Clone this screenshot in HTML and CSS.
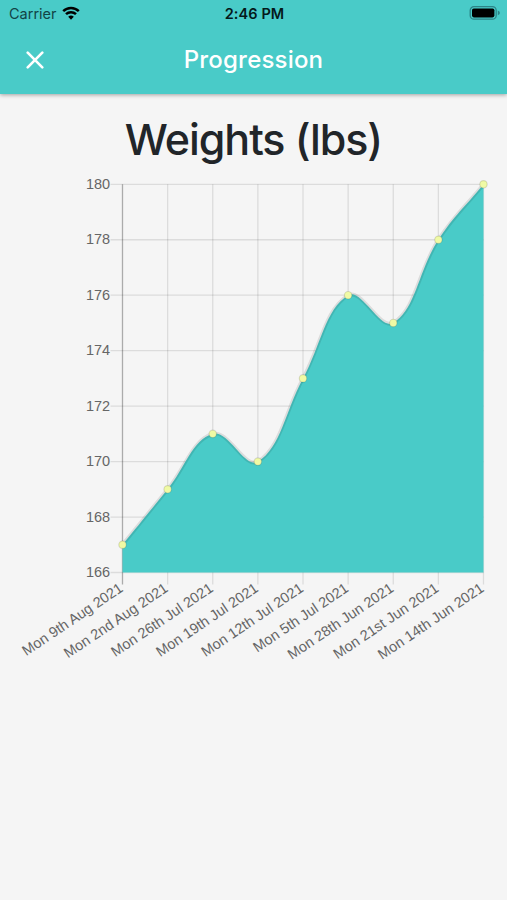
FILE: index.html
```html
<!DOCTYPE html>
<html lang="en">
<head>
    <meta charset="UTF-8">
    <meta name="viewport" content="width=device-width, initial-scale=1.0">
    <title>Progression</title>
    <link rel="stylesheet" href="styles.css">
</head>
<body>
    <header class="header">
        <div class="status-bar">
            <div class="carrier">
                <span>Carrier</span>
                <svg class="wifi" viewBox="0 0 18 14">
                    <path d="M1.2 5.2 A11.2 11.2 0 0 1 16.8 5.2" />
                    <path d="M4 8.2 A7.2 7.2 0 0 1 14 8.2" />
                    <path class="wifi-dot" d="M9 13.7 L6.2 10.8 A4 4 0 0 1 11.8 10.8 Z" />
                </svg>
            </div>
            <div class="time">2:46 PM</div>
            <div class="battery">
                <svg viewBox="0 0 32 16">
                    <rect class="battery-case" x="1.2" y="1.6" width="26" height="12.6" rx="3.8" />
                    <rect x="3" y="3.4" width="22.4" height="9" rx="1.8" />
                    <path class="battery-tip" d="M28.8 5.6 Q30.9 6.4 30.9 7.9 Q30.9 9.4 28.8 10.2 Z" />
                </svg>
            </div>
        </div>
        <div class="nav-bar">
            <svg class="close" viewBox="0 0 18 18">
                <path d="M1.7 1.7 L16.3 16.3 M16.3 1.7 L1.7 16.3" />
            </svg>
            <div class="nav-title">Progression</div>
        </div>
    </header>

    <main class="content">
        <h1 class="chart-title">Weights (lbs)</h1>
        <svg id="chart" class="chart" viewBox="0 170 507 510"></svg>
    </main>

    <script src="script.js"></script>
</body>
</html>
```
FILE: styles.css
```css
body {
    margin: 0;
    min-height: 100vh;
    background: #f5f5f5;
    font-family: Inter, "Liberation Sans", sans-serif;
    overflow: hidden;
}
.header {
    height: 94px;
    background: #49cbc8;
    box-shadow: 0 1px 4px rgba(0, 0, 0, 0.35);
}
.status-bar {
    display: grid;
    grid-template-columns: 1fr auto 1fr;
    align-items: center;
    height: 27px;
    padding: 0 7px 0 9px;
    font-size: 14.5px;
    color: #04191a;
}
.carrier {
    display: flex;
    align-items: center;
    gap: 5px;
    color: #124446;
}
.wifi {
    width: 18px;
    height: 14px;
    margin-bottom: 2px;
    fill: none;
    stroke: #000;
    stroke-width: 2.5;
}
.wifi-dot {
    fill: #000;
    stroke: none;
}
.time {
    font-weight: 600;
    letter-spacing: 0.1px;
}
.battery {
    display: flex;
    justify-content: flex-end;
    margin-right: -1px;
    padding-bottom: 1px;
}
.battery svg {
    width: 32px;
    height: 16px;
}
.battery-case {
    fill: none;
    stroke: #2c8487;
    stroke-width: 1.3;
}
.battery-tip {
    fill: #2c8487;
}
.nav-bar {
    display: grid;
    grid-template-columns: 1fr auto 1fr;
    align-items: center;
    height: 65px;
    padding: 0 26px;
    color: #fff;
}
.close {
    width: 18px;
    height: 18px;
    fill: none;
    stroke: #fff;
    stroke-width: 2.6;
    stroke-linecap: round;
}
.nav-title {
    font-size: 24px;
    font-weight: 500;
    letter-spacing: 0.2px;
}
.content {
    display: flex;
    flex-direction: column;
}
.chart-title {
    margin: 19px 0 5px;
    font-size: 43px;
    font-weight: 500;
    letter-spacing: -1.05px;
    line-height: 52px;
    text-align: center;
    color: #212529;
}
.chart {
    width: 507px;
    height: 510px;
}
.grid-line {
    stroke: rgba(0, 0, 0, 0.1);
    stroke-width: 1.3;
}
.zero-line {
    stroke: rgba(0, 0, 0, 0.3);
    stroke-width: 1.3;
}
.area {
    fill: #49cbc8;
}
.line {
    fill: none;
    stroke: rgba(0, 0, 0, 0.1);
    stroke-width: 3.7;
}
.point {
    fill: #f0faa5;
    stroke: rgba(0, 0, 0, 0.12);
    stroke-width: 1.2;
}
.label {
    font-family: "Liberation Sans", Arial, sans-serif;
    font-size: 14.5px;
    fill: #666;
    text-anchor: end;
}
```
FILE: script.js
```javascript
const weights = [167, 169, 171, 170, 173, 176, 175, 178, 180];
const dates = [
    "Mon 9th Aug 2021",
    "Mon 2nd Aug 2021",
    "Mon 26th Jul 2021",
    "Mon 19th Jul 2021",
    "Mon 12th Jul 2021",
    "Mon 5th Jul 2021",
    "Mon 28th Jun 2021",
    "Mon 21st Jun 2021",
    "Mon 14th Jun 2021"
];

const left = 122.5, right = 483.5, top1 = 184.3, bottom = 572.5;
const min = 166, max = 180, tick = 12;
const chart = document.getElementById("chart");

function add(tag, attrs, text) {
    const el = document.createElementNS("http://www.w3.org/2000/svg", tag);
    for (const key in attrs) {
        el.setAttribute(key, attrs[key]);
    }
    if (text) {
        el.textContent = text;
    }
    chart.appendChild(el);
}

function getX(i) {
    return left + i * (right - left) / (weights.length - 1);
}

function getY(value) {
    return bottom - (value - min) * (bottom - top1) / (max - min);
}

// control points on both sides of a point
function controls(points, i) {
    const cur = points[i];
    const prev = points[i - 1] || cur;
    const next = points[i + 1] || cur;
    const d1 = Math.hypot(cur.x - prev.x, cur.y - prev.y);
    const d2 = Math.hypot(next.x - cur.x, next.y - cur.y);
    const a = 0.4 * d1 / (d1 + d2);
    const b = 0.4 * d2 / (d1 + d2);
    return {
        before: (cur.x - a * (next.x - prev.x)) + " " + (cur.y - a * (next.y - prev.y)),
        after: (cur.x + b * (next.x - prev.x)) + " " + (cur.y + b * (next.y - prev.y))
    };
}

// horizontal grid
for (let v = min; v <= max; v += 2) {
    add("line", { class: "grid-line", x1: left - tick, x2: right, y1: getY(v), y2: getY(v) });
    add("text", { class: "label", x: 110.2, y: getY(v) + 4.6 }, String(v));
}

// vertical grid
dates.forEach((date, i) => {
    const x = getX(i);
    add("line", { class: i === 0 ? "zero-line" : "grid-line", x1: x, x2: x, y1: top1, y2: bottom + tick });
    add("text", { class: "label", transform: "translate(" + (x + 1.4) + " 590.5) rotate(-34)" }, date);
});

const points = weights.map((w, i) => ({ x: getX(i), y: getY(w) }));
let path = "M" + points[0].x + " " + points[0].y;
for (let i = 1; i < points.length; i++) {
    path += " C" + controls(points, i - 1).after + " " + controls(points, i).before + " " + points[i].x + " " + points[i].y;
}

add("path", { class: "area", d: path + " V" + bottom + " H" + left + " Z" });
add("path", { class: "line", d: path });

points.forEach(p => {
    add("circle", { class: "point", cx: p.x, cy: p.y, r: 3.7 });
});
```
